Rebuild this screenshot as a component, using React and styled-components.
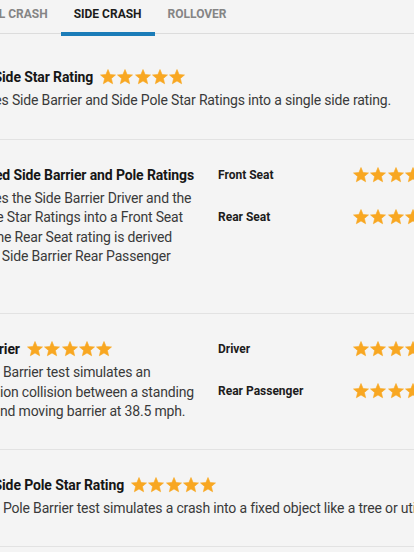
import React from "react";
import styled, { createGlobalStyle } from "styled-components";

const GlobalStyle = createGlobalStyle`
  html, body {
    margin: 0;
    padding: 0;
    background: #f4f4f4;
    overflow: hidden;
  }
  body {
    font-family: Roboto, "Liberation Sans", Arial, sans-serif;
    color: #333;
  }
`;

const Star = ({ size = 18 }) => (
    <svg width={size} height={size} viewBox="0 0 24 24">
        <path
            fill="#f8a722"
            stroke="#f8a722"
            strokeWidth="0.8"
            strokeLinejoin="round"
            d="M12 17.27L18.18 21l-1.64-7.03L22 9.24l-7.19-.61L12 2 9.19 8.63 2 9.24l5.46 4.73L5.82 21z"
        />
    </svg>
);

const Stars = ({ count = 5 }) => (
    <StarRow>
        {Array.from({ length: count }).map((_, i) => (
            <Star key={i} />
        ))}
    </StarRow>
);

const tabs = ["Frontal Crash", "Side Crash", "Rollover"];

const App = () => {
    return (
        <>
            <GlobalStyle />
            <Page>
                <TabBar>
                    {tabs.map((t) => (
                        <Tab key={t} $active={t === "Side Crash"}>
                            {t}
                        </Tab>
                    ))}
                </TabBar>

                <Section>
                    <Title>
                        Overall Side Star Rating <Stars />
                    </Title>
                    <Desc>Combines Side Barrier and Side Pole Star Ratings into a single side rating.</Desc>
                </Section>

                <Section $extra={18}>
                    <Split>
                        <div>
                            <Title>Combined Side Barrier and Pole Ratings</Title>
                            <Desc>
                                Combines the Side Barrier Driver and the Side Pole Star Ratings into a Front Seat
                                rating. The Rear Seat rating is derived from the Side Barrier Rear Passenger
                            </Desc>
                        </div>
                        <Ratings>
                            <Label>Front Seat</Label>
                            <Stars />
                            <Label>Rear Seat</Label>
                            <Stars />
                        </Ratings>
                    </Split>
                </Section>

                <Section $extra={-1}>
                    <Split>
                        <div>
                            <Title>
                                Side Barrier <Stars />
                            </Title>
                            <Desc>
                                The Side Barrier test simulates an intersection collision between a standing
                                vehicle and moving barrier at 38.5 mph.
                            </Desc>
                        </div>
                        <Ratings>
                            <Label>Driver</Label>
                            <Stars />
                            <Label>Rear Passenger</Label>
                            <Stars />
                        </Ratings>
                    </Split>
                </Section>

                <Section>
                    <Title>
                        Overall Side Pole Star Rating <Stars />
                    </Title>
                    <Desc>
                        The Side Pole Barrier test simulates a crash into a fixed object like a tree or utility pole.
                    </Desc>
                </Section>
            </Page>
        </>
    );
};

const Page = styled.div`
    width: 600px;
    margin-left: -53px;
`;

const TabBar = styled.div`
    display: flex;
    align-items: flex-start;
    height: 37px;
    margin: 0 0 5px -7px;
    box-shadow: inset 0 -3px 0 #f4f4f4, inset 0 -4px 0 #dcdcdc;
`;

const Tab = styled.div`
    height: 36px;
    box-sizing: border-box;
    padding: 6px 13px 0;
    font-size: 12px;
    line-height: 16px;
    font-weight: 700;
    text-transform: uppercase;
    color: ${(p) => (p.$active ? "#1c1c1c" : "#858585")};
    border-bottom: 4px solid ${(p) => (p.$active ? "#1b7cb8" : "transparent")};
`;

const Section = styled.div`
    padding: 25px 0 ${(p) => 28 + (p.$extra || 0)}px;
    border-bottom: 1px solid #e2e2e2;
`;

const Split = styled.div`
    display: grid;
    grid-template-columns: 253px auto;
    column-gap: 18px;
    align-items: start;
`;

const Title = styled.div`
    display: flex;
    align-items: center;
    gap: 6px;
    font-size: 14px;
    line-height: 20px;
    font-weight: 700;
    letter-spacing: -0.12px;
    color: #161616;
    white-space: nowrap;
`;

const Desc = styled.p`
    margin: 4px 0 0;
    font-size: 14px;
    line-height: 19.6px;
    letter-spacing: -0.17px;
    color: #3a3a3a;
`;

const Ratings = styled.div`
    display: grid;
    grid-template-columns: 134px auto;
    row-gap: 22px;
    align-items: center;
`;

const Label = styled.div`
    font-size: 12px;
    line-height: 20px;
    font-weight: 700;
    color: #1c1c1c;
`;

const StarRow = styled.span`
    display: inline-flex;
    gap: 0;

    & > svg + svg {
        margin-left: -0.7px;
    }
`;

export default App;
